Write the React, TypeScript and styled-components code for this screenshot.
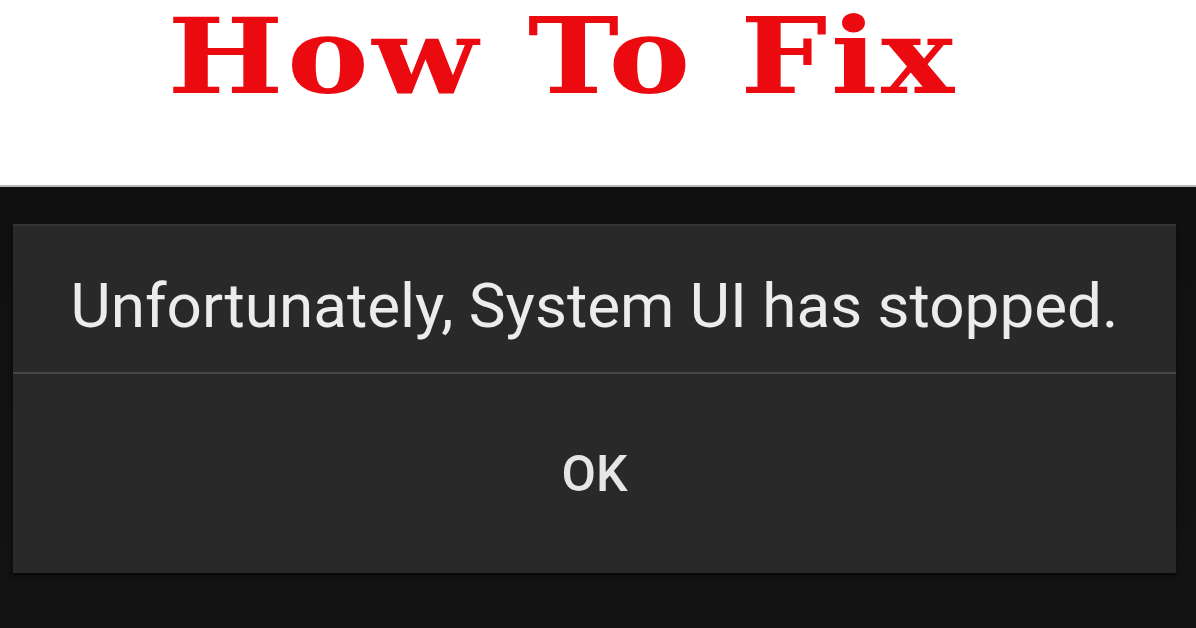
import React from 'react';
import styled, {createGlobalStyle} from 'styled-components';

const GlobalStyle = createGlobalStyle`
    html, body {
        margin: 0;
        padding: 0;
        background: #ffffff;
    }

    #root {
        width: 1196px;
        height: 628px;
        overflow: hidden;
    }
`;

const App = () => (
    <Page>
        <GlobalStyle/>

        <Banner>
            <Title>How To Fix</Title>
        </Banner>

        <Screen>
            <Dialog>
                <Message>Unfortunately, System UI has stopped.</Message>
                <Divider/>
                <ButtonRow>
                    <OkButton type="button">OK</OkButton>
                </ButtonRow>
            </Dialog>
        </Screen>
    </Page>
);

export default App;

const Page = styled.div`
    width: 1196px;
    height: 628px;
    display: flex;
    flex-direction: column;
`;

const Banner = styled.header`
    height: 185px;
    background: #ffffff;
    display: flex;
    align-items: flex-start;
    padding: 0 0 0 158px;
    box-sizing: border-box;
`;

// glyphs of the poster lettering are wider than any installed serif
const Title = styled.h1`
    margin: 0;
    padding: 0 8px;
    font-family: "DejaVu Serif", "Liberation Serif", serif;
    font-weight: 700;
    font-size: 104px;
    line-height: normal;
    letter-spacing: 3px;
    white-space: nowrap;
    color: #ea0a10;
    transform: translateY(-5px) scaleX(1.18);
    transform-origin: left top;
`;

const Screen = styled.main`
    flex: 1;
    background: linear-gradient(180deg, #101010 0%, #131313 100%);
    border-top: 2px solid #b8b8b8;
    padding: 37px 20px 0 13px;
    box-sizing: border-box;
`;

const Dialog = styled.section`
    width: 1163px;
    height: 347px;
    background: #292929;
    border-top: 2px solid #353535;
    box-shadow: 0 3px 4px rgba(0, 0, 0, 0.6);
    display: flex;
    flex-direction: column;
`;

const Message = styled.p`
    margin: 0;
    height: 146px;
    display: flex;
    align-items: center;
    justify-content: center;
    font-family: Roboto, "Noto Sans", sans-serif;
    font-size: 62px;
    color: #ececec;
    padding-top: 12px;
    box-sizing: border-box;
`;

const Divider = styled.hr`
    margin: 0;
    border: none;
    height: 2px;
    background: #454545;
`;

const ButtonRow = styled.div`
    flex: 1;
    display: flex;
    align-items: center;
    justify-content: center;
`;

const OkButton = styled.button`
    background: none;
    border: none;
    padding: 0;
    font-family: Roboto, "Noto Sans", sans-serif;
    font-size: 50px;
    font-weight: 500;
    color: #e6e6e6;
`;
